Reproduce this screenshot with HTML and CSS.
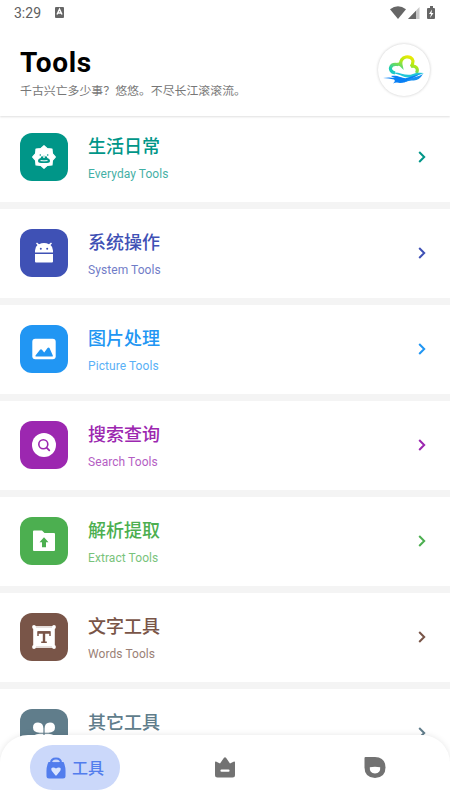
FILE: index.html
```html
<!DOCTYPE html>
<html lang="zh-CN">
<head>
<meta charset="utf-8">
<title>Tools</title>
<link rel="stylesheet" href="styles.css">
</head>
<body>
<div class="app">
  <header class="header">
    <div class="status">
      <span class="time">3:29</span>
      <svg class="keyboard" width="9" height="11" viewBox="0 0 9 11"><rect width="9" height="11" rx="1" fill="#666"/><path d="M2 7.500 4.500 2.200 7 7.500M3 6h3" fill="none" stroke="#fff" stroke-width="1.400"/></svg>
      <svg class="signals" width="46" height="14" viewBox="0 0 46 14" fill="#666"><path d="M0 3.200Q8-2.700 16 3.200L8 13Z"/><path d="M29.500 1v12H18Z" fill="#c8c8c8"/><path d="M26 4.700V13h-8Z"/><path d="M38 2h2V0h3v2h1q1 0 1 1v9q0 1-1 1h-6q-1 0-1-1V3q0-1 1-1Z"/><path d="M42 3.500 39 8h2l-1 4 3.500-5h-2Z" fill="#fff"/></svg>
    </div>
    <div class="heading">
      <div>
        <h1>Tools</h1>
        <p class="quote">千古兴亡多少事？悠悠。不尽长江滚滚流。</p>
      </div>
      <div class="avatar">
        <svg width="42" height="30" viewBox="0 0 42 30">
          <defs><linearGradient id="cloud" x1="1" y1="0" x2="0.300" y2="1"><stop offset="0" stop-color="#ffea00"/><stop offset=".4" stop-color="#b5e914"/><stop offset="1" stop-color="#16cbbb"/></linearGradient></defs>
          <path d="M12 18C4.500 16 7 8.500 14 9.500C16 8.500 17 9 18 10C16 .5 29 -.5 30 6C30 8 29 10.500 28 11.500C32 10 36 13 33.500 18" fill="none" stroke="url(#cloud)" stroke-width="3.200"/>
          <path d="M7 18C17 16 22 22 30 19Q34 17 41 18Q35 20 31 22C22 25 17 18 7 18Z" fill="#20c5d8"/>
          <path d="M0 23Q6 22 12 23Q9 22 8 21C16 20 19 24 24 23C29 21 33 20 38 19C29 22 25 28 17 28Q13 27 10 28.500Q13 26 11 24.500Q6 23 0 23Z" fill="#087ff5"/>
          <path d="M20 28C25 25 27 23 32 22Q37 21 40 19Q36 26 30 25.500Q25 25 20 28Z" fill="#168ff2"/>
        </svg>
      </div>
    </div>
  </header>

  <main class="list">
    <section class="row everyday">
      <div class="tile"><svg width="24" height="24" viewBox="0 0 24 24"><path d="m12 .7 3.300 2.900 4.700.4.400 4.700L23.300 12l-2.900 3.300-.4 4.700-4.700.4-3.300 2.900-3.300-2.900L4 20l-.4-4.700L.7 12l2.900-3.300L4 4l4.700-.4Z" fill="#fff" stroke="#fff" stroke-width="1.200" stroke-linejoin="round"/><circle cx="8.300" cy="10" r=".8"/><circle cx="15.700" cy="10" r=".8"/><path d="M8.700 13q.3-2.300 3.300-2.300t3.300 2.300q2.700.5 2.700 2.800Q18 18 15 18H9q-3 0-3-2.200Q6 13.500 8.700 13Z"/><path d="m10.200 11.200 1.800 2 1.800-2Z" fill="#fff"/><path d="M8.500 15.600q3.500.5 7 0" fill="none" stroke="#fff"/></svg></div>
      <div class="text"><h2>生活日常</h2><p>Everyday Tools</p></div>
      <svg class="chevron" width="8" height="12" viewBox="0 0 8 12"><path d="m1.200 1 5 5-5 5"/></svg>
    </section>
    <section class="row system">
      <div class="tile"><svg width="24" height="24" viewBox="0 0 24 24"><path d="M3 11.500V9.500Q3 6 5.500 4L4 2.500l1-1 2 1.700Q12 .8 17 3.200l2-1.700 1 1L18.500 4Q21 6 21 9.500v2ZM3 13h18v7.500q0 1-1 1H4q-1 0-1-1Z" fill="#fff"/><circle cx="8.800" cy="7.800" r="1"/><circle cx="15.200" cy="7.800" r="1"/></svg></div>
      <div class="text"><h2>系统操作</h2><p>System Tools</p></div>
      <svg class="chevron" width="8" height="12" viewBox="0 0 8 12"><path d="m1.200 1 5 5-5 5"/></svg>
    </section>
    <section class="row picture">
      <div class="tile"><svg width="24" height="24" viewBox="0 0 24 24"><rect x=".3" y="1.700" width="23.400" height="20.600" rx="3" fill="#fff"/><path d="M3.500 18.500 8 12.800q1-1 2 0l2.200 2.700 3.300-4.500q1-1 2 0l3.300 7.500q.5 1-.5 1H4q-1 0-.5-1Z"/></svg></div>
      <div class="text"><h2>图片处理</h2><p>Picture Tools</p></div>
      <svg class="chevron" width="8" height="12" viewBox="0 0 8 12"><path d="m1.200 1 5 5-5 5"/></svg>
    </section>
    <section class="row search">
      <div class="tile"><svg width="24" height="24" viewBox="0 0 24 24"><circle cx="12" cy="12" r="12" fill="#fff"/><circle cx="11.300" cy="11.300" r="4.500" fill="none" stroke="currentColor" stroke-width="1.600"/><path d="m14.800 14.800 2.500 2.500" stroke="currentColor" stroke-width="1.800" stroke-linecap="round"/></svg></div>
      <div class="text"><h2>搜索查询</h2><p>Search Tools</p></div>
      <svg class="chevron" width="8" height="12" viewBox="0 0 8 12"><path d="m1.200 1 5 5-5 5"/></svg>
    </section>
    <section class="row extract">
      <div class="tile"><svg width="24" height="24" viewBox="0 0 24 24"><path d="M1 2.500q0-1 1-1h8L12.500 4H22q1 0 1 1v16q0 1-1 1H2q-1 0-1-1Z" fill="#fff"/><path d="m12 8.200 4.500 5H14v5h-4v-5H7.500Z"/></svg></div>
      <div class="text"><h2>解析提取</h2><p>Extract Tools</p></div>
      <svg class="chevron" width="8" height="12" viewBox="0 0 8 12"><path d="m1.200 1 5 5-5 5"/></svg>
    </section>
    <section class="row words">
      <div class="tile"><svg width="24" height="24" viewBox="0 0 24 24"><path d="M1.200 1.200h21.600v21.600H1.200Z" fill="#fff"/><g fill="#fff"><circle cx="2" cy="2" r="1.900"/><circle cx="22" cy="2" r="1.900"/><circle cx="2" cy="22" r="1.900"/><circle cx="22" cy="22" r="1.900"/></g><path d="M4 2.500h16M4 21.500h16" stroke="currentColor" stroke-width=".5" opacity=".35"/><path d="M6 11V7h12v4M12 7.500V17M9.200 17.300h5.600" fill="none" stroke="currentColor" stroke-width="1.500"/><path d="M6 7.500h12M12 8v9" stroke="currentColor" stroke-width="2.400"/></svg></div>
      <div class="text"><h2>文字工具</h2><p>Words Tools</p></div>
      <svg class="chevron" width="8" height="12" viewBox="0 0 8 12"><path d="m1.200 1 5 5-5 5"/></svg>
    </section>
    <section class="row other">
      <div class="tile"><svg width="24" height="24" viewBox="0 0 24 24"><path fill="#fff" d="M11.400 11.700H7.500Q1 11.500 1 6.500 1 1.500 6 1.500q5.400 0 5.400 6ZM12.600 11.700h3.900Q23 11.500 23 6.500 23 1.500 18 1.500q-5.400 0-5.400 6ZM11.400 12.700H7.500Q1 13 1 17.500 1 22.500 6 22.500q5.400 0 5.400-6ZM12.600 12.700h3.900Q23 13 23 17.500 23 22.500 18 22.500q-5.400 0-5.400-6Z"/></svg></div>
      <div class="text"><h2>其它工具</h2><p>Other Tools</p></div>
      <svg class="chevron" width="8" height="12" viewBox="0 0 8 12"><path d="m1.200 1 5 5-5 5"/></svg>
    </section>
  </main>

  <nav class="nav">
    <div class="item"><div class="pill"><svg width="20" height="22" viewBox="0 0 20 22"><path d="M5 6.500V6q0-4.500 5-4.500T15 6v.5" fill="none" stroke="#527ded" stroke-width="2"/><path d="M2.500 5h15Q20 9 19.500 19q0 2.500-2.500 2.500H3Q.5 21.500.5 19 0 9 2.500 5Z" fill="#527ded"/><path d="M7 4.500h6" stroke="#cbd8fa" stroke-width="1.200"/><path d="M6 10.700q2-.7 4 .8 2-1.500 4-.8 1.500.7.300 3L10.700 18.300q-.7.800-1.400 0l-3.600-4.600q-1.200-2.300.3-3Z" fill="#dbe6ff"/></svg><span>工具</span></div></div>
    <div class="item"><svg width="20" height="21" viewBox="0 0 20 21"><path d="M0 5.500q0-1.500 1.500-.8L5 6.500 9 .8q1-1.300 2 0l4 5.700 3.500-1.800Q20 4 20 5.500V18q0 2.500-2.500 2.500h-15Q0 20.500 0 18Z" fill="#727272"/><path d="M6.500 13.700h7" stroke="#fff" stroke-width="2.200" stroke-linecap="round"/></svg></div>
    <div class="item"><svg width="22" height="21" viewBox="0 0 22 21"><path d="M.5 1q0-1 1-1H11q10.500.5 10.500 10.500T11 21Q.5 20.500.5 10.500Z" fill="#727272"/><path d="M5.800 10.300q5.200-1.200 10.400 0 .5 6-5.200 6.200-5.700-.2-5.200-6.200Z" fill="#fff"/></svg></div>
  </nav>
</div>
</body>
</html>
```

FILE: styles.css
```css
* { box-sizing: border-box; }
body, h1, h2, p { margin: 0; }
body { background: #fff; font-family: Roboto, "Noto Sans CJK SC", sans-serif; }
svg { display: block; flex: none; }

.app { height: 800px; width: 450px; overflow: hidden; display: flex; flex-direction: column; }

.header { position: relative; z-index: 1; flex: none; height: 116px; background: #fff; box-shadow: 0 1px 2px rgba(0, 0, 0, .13); }
.status { display: flex; align-items: center; height: 26px; padding: 0 14px; }
.time { width: 41px; font-size: 14px; line-height: 20px; color: #606060; }
.keyboard { margin-top: -1px; }
.signals { margin-left: auto; margin-top: -1px; }
.heading { display: flex; justify-content: space-between; padding: 18px 20px 0 20px; }
h1 { margin-top: 2px; font-size: 28px; line-height: 33px; font-weight: 700; letter-spacing: .7px; color: #000; }
.quote { margin-top: 3px; font-size: 11.900px; line-height: 18px; color: #777; white-space: nowrap; }
.avatar { display: flex; align-items: center; justify-content: center; width: 52px; height: 52px; border-radius: 50%; background: #fff; box-shadow: 0 0 3px rgba(0, 0, 0, .22); }

.list { flex: none; height: 684px; margin-top: -3px; background: #f4f4f4; }
.row { display: flex; align-items: flex-start; height: 88.500px; margin-bottom: 7.500px; padding: 20.400px 24px 0 20px; background: #fff; color: var(--tone); }
.tile { display: flex; align-items: center; justify-content: center; width: 48px; height: 48px; border-radius: 12px; background: var(--tone); }
.tile svg { fill: var(--tone); }
.text { flex: 1; margin-left: 20px; }
h2 { font-size: 18px; line-height: 26px; font-weight: 500; padding-top: .6px; }
.text p { margin-top: 5px; font-size: 12px; line-height: 18px; letter-spacing: .07px; opacity: .75; }
.chevron { margin-top: 18px; fill: none; stroke: currentColor; stroke-width: 2; }

.everyday { --tone: #009688; }
.system { --tone: #3f51b5; }
.picture { --tone: #2196f3; }
.search { --tone: #9c27b0; }
.extract { --tone: #4caf50; }
.words { --tone: #795548; }
.other { --tone: #607d8b; }

.nav { position: absolute; left: 0; top: 735px; display: flex; align-items: center; width: 450px; height: 65px; border-radius: 28px 28px 0 0; background: #fff; box-shadow: 0 0 6px rgba(0, 0, 0, .1); z-index: 2; }
.item { flex: 1; display: flex; justify-content: center; }
.pill { display: flex; align-items: center; justify-content: center; gap: 6px; width: 90px; height: 45px; border-radius: 23px; background: #cbd8fa; color: #527ded; font-size: 16px; line-height: 22px; font-weight: 500; }
.pill span { margin-top: 2px; }
```
